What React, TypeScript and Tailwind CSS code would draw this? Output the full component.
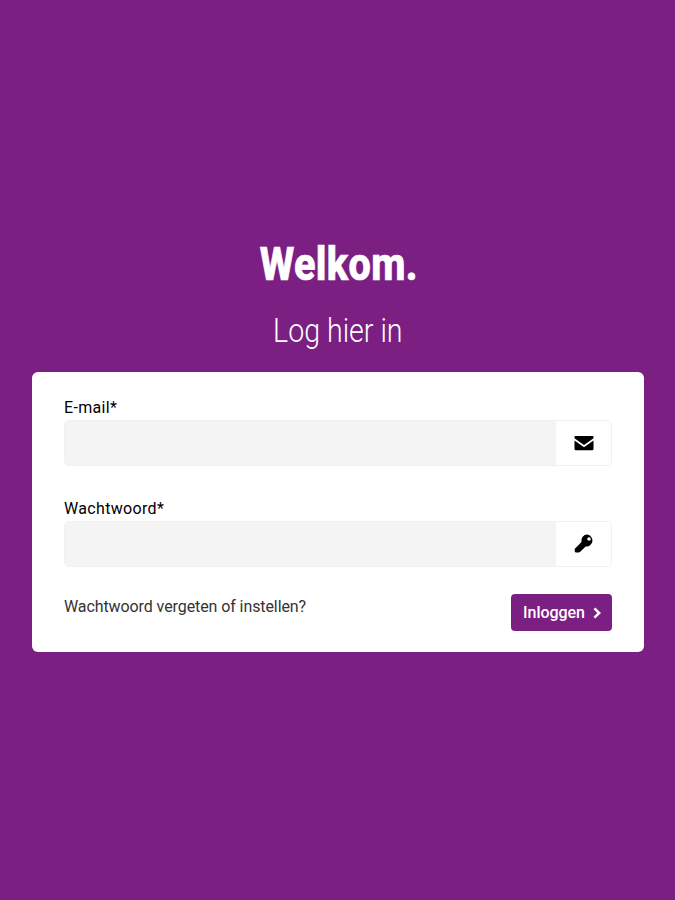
import type { ReactNode } from "react";

interface FieldProps {
  id: string;
  label: string;
  type: string;
  icon: ReactNode;
}

const EnvelopeIcon = () => (
  <svg width="20" height="15" viewBox="0 0 20 15" fill="currentColor">
    <path d="M1.5 0h17a1 1 0 0 1 1 1v1.3L10 9 0.5 2.3V1a1 1 0 0 1 1-1z" />
    <path d="M0.5 4.5 10 11.2l9.5-6.7V13a1.3 1.3 0 0 1-1.3 1.3H1.8A1.3 1.3 0 0 1 0.5 13z" />
  </svg>
);

const KeyIcon = () => (
  <svg width="20" height="20" viewBox="0 0 20 20" fill="currentColor">
    <path
      fillRule="evenodd"
      d="M13.3 0.6a6 6 0 1 1-1.6 11.9l-5.5 5.3a2.5 2.5 0 0 1-2 0.8H2.4A1.7 1.7 0 0 1 0.7 17v-1.4c0-0.6 0.2-1 0.6-1.4l6.2-6.3A6 6 0 0 1 13.3 0.6zM15 3.2a1.8 1.8 0 1 0 0 3.6 1.8 1.8 0 0 0 0-3.6z"
    />
  </svg>
);

const ChevronIcon = () => (
  <svg width="9" height="12" viewBox="0 0 9 12" fill="none" stroke="currentColor" strokeWidth="2.5">
    <path d="M1.4 1.4 6.2 6l-4.8 4.6" />
  </svg>
);

const Field = ({ id, label, type, icon }: FieldProps) => (
  <div>
    <label htmlFor={id} className="block h-5 text-base leading-[21px] tracking-[0.33px] text-black">
      {label}
    </label>
    <div className="mt-[3px] flex h-[46px] overflow-hidden rounded-[5px] border border-[#f0f0f0]">
      <input id={id} type={type} className="min-w-0 flex-1 bg-[#f4f4f4] px-3 outline-none" />
      <span className="flex w-[55px] items-center justify-center bg-white text-black">{icon}</span>
    </div>
  </div>
);

const App = () => {
  return (
    <div className="min-h-screen bg-[#7b2082] px-8 pt-[236px] font-['Roboto',sans-serif]">
      <div className="flex flex-col items-center text-white">
        <h1 className="h-14 origin-center scale-x-[0.86] pl-0.5 text-[46px] leading-14 font-extrabold tracking-[0.4px] [-webkit-text-stroke:0.7px_white]">
          Welkom.
        </h1>
        <h2 className="mt-5 h-10 origin-center scale-x-[0.865] text-[33px] leading-[38px] font-light">Log hier in</h2>
      </div>

      <form className="mt-5 h-[280px] w-[612px] rounded-md bg-white px-8 pt-[25px]" onSubmit={(e) => e.preventDefault()}>
        <Field id="email" label="E-mail*" type="email" icon={<EnvelopeIcon />} />
        <div className="mt-8">
          <Field id="password" label="Wachtwoord*" type="password" icon={<KeyIcon />} />
        </div>
        <div className="mt-[27px] flex items-start justify-between">
          <a href="#" className="mt-[3px] text-base leading-5 tracking-[-0.09px] text-[#333333]">
            Wachtwoord vergeten of instellen?
          </a>
          <button
            type="submit"
            className="flex h-[37px] w-[101px] items-center justify-center gap-2 rounded-[4px] bg-[#7b2082] pl-0.5 text-base leading-5 font-medium tracking-[-0.05px] text-white"
          >
            Inloggen
            <ChevronIcon />
          </button>
        </div>
      </form>
    </div>
  );
};

export default App;
